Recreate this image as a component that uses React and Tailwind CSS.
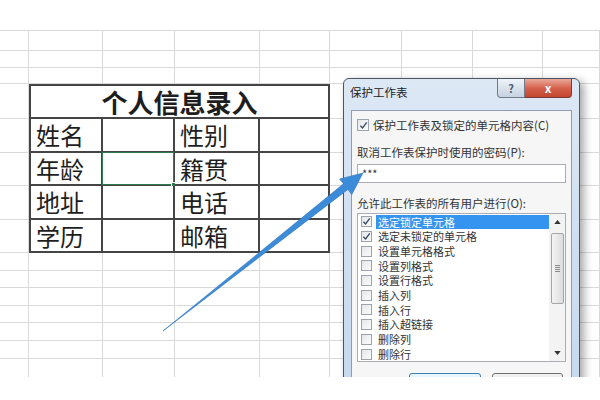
import React from 'react';

const cjk = { fontFamily: '"Noto Sans CJK SC", "Noto Sans", sans-serif' };

const TABLE_ROWS = [
  ['姓名', '', '性别', ''],
  ['年龄', '', '籍贯', ''],
  ['地址', '', '电话', ''],
  ['学历', '', '邮箱', ''],
];

const LIST_ITEMS = [
  { label: '选定锁定单元格', checked: true, selected: true },
  { label: '选定未锁定的单元格', checked: true },
  { label: '设置单元格格式' },
  { label: '设置列格式' },
  { label: '设置行格式' },
  { label: '插入列' },
  { label: '插入行' },
  { label: '插入超链接' },
  { label: '删除列' },
  { label: '删除行' },
];

function Check({ checked, size = 'h-[12px] w-[12px]' }) {
  return (
    <span
      className={`inline-flex ${size} shrink-0 items-center justify-center border border-[#9aa3ae] bg-gradient-to-br from-[#e4e7ea] to-[#fbfbfb]`}
    >
      {checked ? (
        <svg viewBox="0 0 10 10" className="h-[9px] w-[9px]">
          <path d="M1.5 5.2 L4 7.8 L8.6 1.6" fill="none" stroke="#3a4a66" strokeWidth="1.5" />
        </svg>
      ) : null}
    </span>
  );
}

function InfoTable() {
  return (
    <div
      className="col-start-2 col-span-4 row-start-4 row-span-5 grid grid-cols-[72px_72px_85px_70px] grid-rows-[33px_34px_33px_34px_33px] border-l-2 border-t-2 border-[#454545] bg-white text-[#1e1e1e]"
      style={cjk}
    >
      <div className="col-span-4 flex items-center justify-center border-b-2 border-r-2 border-[#454545] pt-px text-[26px] font-bold leading-none">
        个人信息录入
      </div>
      {TABLE_ROWS.map((row, r) =>
        row.map((text, c) => (
          <div
            key={`${r}-${c}`}
            className="relative flex items-center border-b-2 border-r-2 border-[#454545] pl-[5px] text-[24px] leading-none"
          >
            {text}
            {r === 1 && c === 1 ? (
              <div className="absolute -inset-[1px] border border-[#2f7a4c]">
                <span className="absolute -bottom-[3px] -right-[3px] h-[5px] w-[5px] border border-white bg-[#2f7a4c]" />
              </div>
            ) : null}
          </div>
        ))
      )}
    </div>
  );
}

function Sheet() {
  const cells = Array.from({ length: 115 });
  return (
    <div className="grid grid-cols-[29px_74px_72px_85px_70px_72px_71px_70px_1fr] grid-rows-[20px_17px_16px_35px_34px_33px_34px_33px_18px_17px_18px_17px_18px_18px_19px] border-t border-[#d9d9d9]">
      <InfoTable />
      {cells.map((_, idx) => (
        <div key={idx} className="border-b border-r border-[#dadada]" />
      ))}
    </div>
  );
}

function Dialog() {
  return (
    <div
      className="absolute left-[343px] top-[48px] w-[237px] rounded-t-[6px] border border-[#4d5562] bg-gradient-to-b from-[#dde8f5] via-[#cfdff1] to-[#c6d9ee] pb-[8px] text-[#333] shadow-[4px_3px_8px_rgba(0,0,0,0.35)]"
      style={cjk}
    >
      <div className="flex items-start justify-between pl-[6px] pr-[7px]">
        <span className="pt-[4px] text-[11.5px] leading-[18px] text-[#222]">保护工作表</span>
        <div className="flex">
          <div className="flex h-[19px] w-[28px] items-center justify-center rounded-bl-[4px] border border-t-0 border-[#6f7b8b] bg-gradient-to-b from-[#eef3f8] to-[#c5d2e1] text-[11px] font-bold text-[#4c5b70]">
            ?
          </div>
          <div className="flex h-[19px] w-[47px] items-center justify-center rounded-br-[4px] border border-l-0 border-t-0 border-[#7d3a30] bg-gradient-to-b from-[#e9a999] via-[#d4614d] to-[#c24630] text-[12px] font-bold text-white">
            x
          </div>
        </div>
      </div>

      <div className="mx-[7px] mt-[9px] flex h-[280px] flex-col border border-[#8e9db3] bg-[#f6f6f6] pl-[5px] pr-[5px] pt-[7px]">
        <div className="flex items-center gap-[4px] text-[11.5px] leading-[14px]">
          <Check checked />
          <span>保护工作表及锁定的单元格内容(C)</span>
        </div>
        <div className="mt-[13px] text-[11.5px] leading-[14px]">取消工作表保护时使用的密码(P):</div>
        <div className="mt-[5px] flex h-[21px] w-[209px] items-center border border-[#abadb3] bg-white pl-[4px] text-[11px]">
          ***
        </div>
        <div className="mt-[13px] text-[11.5px] leading-[14px]">允许此工作表的所有用户进行(O):</div>
        <div className="mt-[3px] flex h-[151px] w-[209px] border border-[#abadb3] bg-white">
          <div className="flex-1 pl-[3px] pt-[1px]">
            {LIST_ITEMS.map((item) => (
              <div key={item.label} className="flex h-[14.7px] items-center gap-[4px] text-[11px]">
                <Check checked={item.checked} size="h-[11px] w-[11px]" />
                <span
                  className={`flex h-full flex-1 items-center pl-[2px] ${
                    item.selected ? 'bg-[#3594f0] text-white' : ''
                  }`}
                >
                  {item.label}
                </span>
              </div>
            ))}
          </div>
          <div className="flex w-[16px] flex-col items-center bg-[#f3f3f3] py-[1px]">
            <div className="flex h-[15px] items-center">
              <svg viewBox="0 0 8 5" className="h-[4px] w-[7px]">
                <path d="M0 5 L4 0 L8 5 Z" fill="#333" />
              </svg>
            </div>
            <div className="mt-[3px] flex h-[71px] w-[13px] items-center justify-center rounded-[2px] border border-[#a5a5a5] bg-gradient-to-r from-[#f4f4f4] to-[#dcdcdc]">
              <div className="flex flex-col gap-[1px]">
                <span className="h-px w-[5px] bg-[#8a8a8a]" />
                <span className="h-px w-[5px] bg-[#8a8a8a]" />
                <span className="h-px w-[5px] bg-[#8a8a8a]" />
                <span className="h-px w-[5px] bg-[#8a8a8a]" />
              </div>
            </div>
            <div className="mt-auto flex h-[15px] items-center">
              <svg viewBox="0 0 8 5" className="h-[4px] w-[7px]">
                <path d="M0 0 L8 0 L4 5 Z" fill="#333" />
              </svg>
            </div>
          </div>
        </div>
        <div className="mt-[11px] flex gap-[11px] pl-[52px]">
          <div className="h-[23px] w-[72px] rounded-[3px] border border-[#3c7fb1] bg-gradient-to-b from-[#eaf6fd] to-[#bee6fd]" />
          <div className="h-[23px] w-[71px] rounded-[3px] border border-[#707070] bg-gradient-to-b from-[#f2f2f2] to-[#dddddd]" />
        </div>
      </div>
    </div>
  );
}

export default function App() {
  return (
    <div className="relative h-[400px] w-[600px] overflow-hidden bg-white">
      <div className="h-[30px]" />
      <div className="relative h-[347px] overflow-hidden">
        <Sheet />
        <Dialog />
      </div>
      <div className="h-[23px] bg-white" />
      <svg className="pointer-events-none absolute inset-0 h-[400px] w-[600px]" viewBox="0 0 600 400">
        <path
          d="M163 331 L347.9 189.4 L351.8 194.5 L363 173 L339.6 179 L343.5 183.8 Z"
          fill="#3b8bd8"
          stroke="#2f76c0"
          strokeWidth="0.6"
          strokeLinejoin="round"
        />
      </svg>
    </div>
  );
}
